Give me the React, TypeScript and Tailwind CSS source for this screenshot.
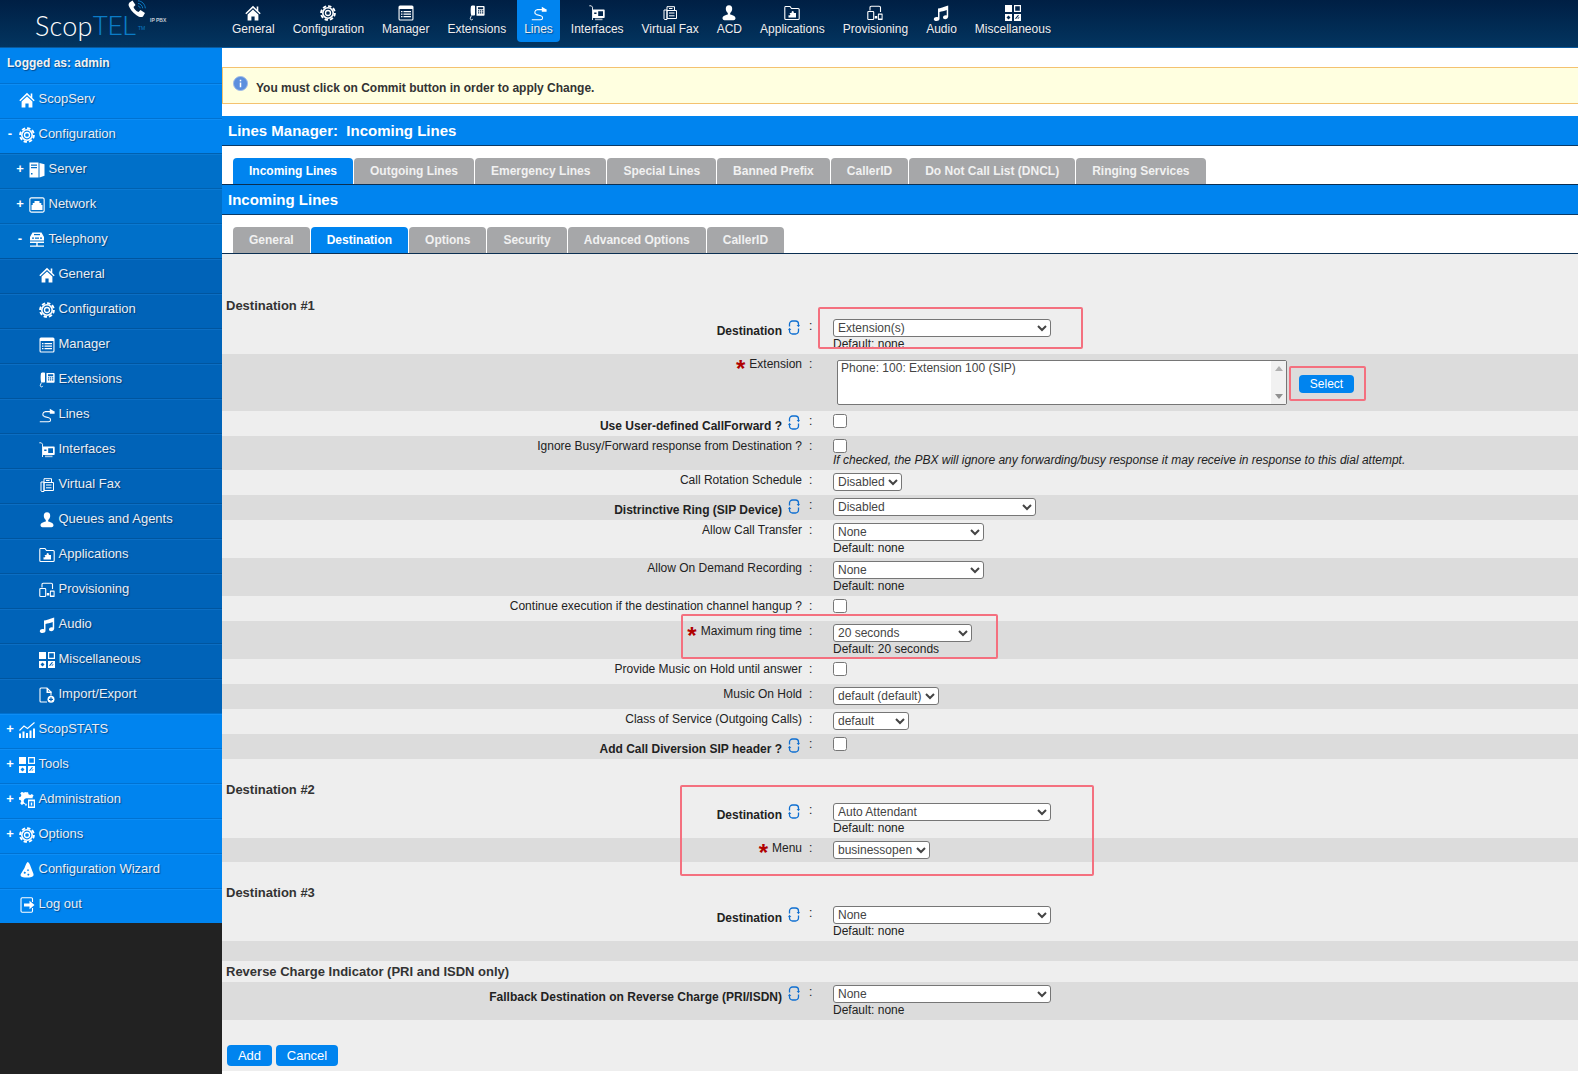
import React from "react";

type IP = { className?: string };
const S = ({ children, className = "" }: { children: React.ReactNode; className?: string }) => (
  <svg viewBox="0 0 16 16" className={"h-4 w-4 shrink-0 text-white " + className} fill="currentColor">{children}</svg>
);
const Home = (p: IP) => (
  <S {...p}><path d="M8 .8 .3 8.2l1 1L8 3l6.700 6.200 1-1-2.400-2.300V1.600h-1.600v2.800z" /><path d="M2.600 9.600 8 4.600l5.400 5v5.800H9.600v-4H6.400v4H2.600z" /></S>
);
const Gear = (p: IP) => (
  <S {...p}><circle cx="8" cy="8" r="6.900" fill="none" stroke="currentColor" strokeWidth="1.900" strokeDasharray="3.400 2" /><circle cx="8" cy="8" r="5.200" fill="none" stroke="currentColor" strokeWidth="1.600" /><circle cx="8" cy="8" r="2.500" fill="none" stroke="currentColor" strokeWidth="1.300" /></S>
);
const Manager = (p: IP) => (
  <S {...p}><path fillRule="evenodd" d="M2 .5h12A1.500 1.500 0 0 1 15.500 2v12a1.500 1.500 0 0 1-1.500 1.500H2A1.500 1.500 0 0 1 .5 14V2A1.500 1.500 0 0 1 2 .5zM1.600 4v10c0 .3.100.4.400.4h12c.3 0 .4-.1.4-.4V4z" /><path d="M3 6h1.500v1.200H3zm2.500 0H13v1.200H5.500zM3 8.500h1.500v1.200H3zm2.500 0H13v1.200H5.500zM3 11h1.500v1.200H3zm2.500 0H13v1.200H5.500z" /></S>
);
const Ext = (p: IP) => (
  <S {...p}><path d="M2 1.200C2.300.5 3 .4 3.500.4h1.700c.5 0 .8.300.8.800v8.600c0 .5-.3.800-.8.800H3.400c-.5 0-1-.2-1.400-.8-.5-2.500-.5-6.500 0-8.600z" /><path d="M2.400 10.500c-.3 1.200-.8 1.700-1.100 2.700-.4 1.700 2 2.400 2.400.7" fill="none" stroke="currentColor" strokeWidth=".9" /><path fillRule="evenodd" d="M7.500.9h7c.7 0 1.100.4 1.100 1.100v7.700c0 .7-.4 1.100-1.100 1.100h-7zM9 2.200v2h5.200v-2zm0 3v1.200h1.300V5.200zm2 0v1.200h1.300V5.200zm2 0v1.200h1.300V5.200zM9 7.300v1.200h1.300V7.300zm2 0v1.200h1.300V7.300zm2 0v1.200h1.300V7.300z" /></S>
);
const Lines = (p: IP) => (
  <S {...p}><path d="M.8 14.800h8.700c2.700 0 2.700-3.400.3-4L5.500 9.600C3 8.800 3.200 5 6.500 4.600h5" fill="none" stroke="currentColor" strokeWidth="1.100" /><path d="M10.800 1.700 15 4.200h.6v2.600h-4.800V6z" /></S>
);
const Iface = (p: IP) => (
  <S {...p}><path d="M.3 .8h2l1.200 1.400V15" fill="none" stroke="currentColor" strokeWidth=".9" /><path fillRule="evenodd" d="M4 4.500h10.700c.6 0 1 .4 1 1v6.500c0 .6-.4 1-1 1H4zm1.200 3v1.600h2.300V7.500zm4-1.300v4.800h4.800V6.200z" /><path d="M6 13.600h7.500v1.600H6z" opacity=".65" /></S>
);
const Fax = (p: IP) => (
  <S {...p}><path fill="none" stroke="currentColor" strokeWidth="1" d="M5 5.500V1.700h7.500v3.800M2 5h3v9.500H2.500l-.5-.5zM5 5.500h9.500v8H5zM7 3.500h3.500M7 8h5.500M7 10.800h5.500" /></S>
);
const Person = (p: IP) => (
  <S {...p}><path d="M8 .3c2.200 0 3.300 1.700 3.200 3.700-.1 1.800-.9 3.200-2 4v1.500c2.500.7 5.300 1.400 5.300 3.800 0 1.200-1 1.900-2 1.900H3.500c-1 0-2-.7-2-1.900 0-2.400 2.800-3.100 5.300-3.800V8c-1.100-.8-1.900-2.200-2-4C4.700 2 5.800.3 8 .3z" /></S>
);
const Apps = (p: IP) => (
  <S {...p}><path fill="none" stroke="currentColor" strokeWidth="1.100" d="M.8 3v10.500c0 .6.400 1 1 1h12.400c.6 0 1-.4 1-1V4.500c0-.6-.4-1-1-1H7.500L6 1.500H1.300C.8 1.500.8 2 .8 3z" /><path d="M6 8h1.700c-.5-1 .2-2 1-2s1.500 1 1 2H12v4.500H4.500v-2.200c1 .4 1.800-.1 1.800-1s-.8-1.400-1.800-1z" /></S>
);
const Prov = (p: IP) => (
  <S {...p}><path fill="none" stroke="currentColor" strokeWidth="1.100" d="M3 5.500V2.500c0-.7.400-1.200 1.200-1.200h8c.8 0 1.300.5 1.300 1.200V7M1.500 6.500h4.500c.4 0 .7.300.7.700v6.600c0 .4-.3.700-.7.700H1.500c-.4 0-.7-.3-.7-.7V7.200c0-.4.300-.7.700-.7z" /><path d="M7.800 11h2.500v2.500H7.800z" /><path fillRule="evenodd" d="M11.500 8.500h3.500c.4 0 .6.200.6.600v5.300c0 .4-.2.600-.6.600h-3.500c-.4 0-.6-.2-.6-.6V9.100c0-.4.200-.6.600-.6zm.4 1.200v3.800h2.700V9.700z" /></S>
);
const Music = (p: IP) => (
  <S {...p}><path d="M5 3.500C7 3 11 2 15.200.4V11.500c0 1.600-1.500 2.700-3 2.700-1.300 0-2.200-.7-2.200-1.700 0-1.300 1.400-2.200 2.700-2.200.4 0 .8.100 1 .2V5C11 6 8.800 6.500 6.500 7v7c0 1.300-1.500 2-3 2C2 16 .8 15.300.8 14.200c0-1.300 1.400-2.200 2.700-2.200.6 0 1 .100 1.500.3z" /></S>
);
const Misc = (p: IP) => (
  <S {...p}><path d="M0 0h7v7H0z" /><path fillRule="evenodd" d="M9 0h7v7H9zm1.200 1.200v4.600h4.600V1.200z" /><path fillRule="evenodd" d="M0 9h7v7H0zM3.500 10.500 1.500 12.500l2 2 2-2z" /><path fillRule="evenodd" d="M9 9h7v7H9zm2 5 3-3.500-1-.5-3 3.500zm2 0 1.500-1.500-.5-.5-1.500 1.500z" /></S>
);
const Server = (p: IP) => (
  <S {...p}><path fillRule="evenodd" d="M.5 .5h9v15h-9zm1.500 2v1.200h6V2.500zm0 2.500v1.200h6V5zM2 11v1.500h1.500V11z" /><path d="M10.500 1l5 1.300v11.500l-5 1.700z" /></S>
);
const Net = (p: IP) => (
  <S {...p}><path fillRule="evenodd" d="M2.500.3h11c1.300 0 2.200.9 2.200 2.200v11c0 1.300-.9 2.200-2.200 2.200h-11c-1.300 0-2.200-.9-2.200-2.200v-11C.3 1.200 1.200.3 2.500.3zm0 1.100c-.7 0-1.100.4-1.100 1.100v11c0 .7.400 1.100 1.100 1.100h11c.7 0 1.100-.4 1.100-1.100v-11c0-.7-.4-1.100-1.100-1.100z" /><path d="M5.500 4h5v2h1.800v2h1.200v5H2.500V8h1.200V6h1.800z" /></S>
);
const Tel = (p: IP) => (
  <S {...p}><path d="M3.500.5h9l2.500 4.500v3.500H1V5z" /><path d="M5 2h6v1.200H5z" fill="#0070c9" /><path d="M3 5.500h2v1.200H3zm3 0h4v1.200H6zm5 0h2v1.200h-2z" fill="#0070c9" /><path d="M1 9.500h14V11H8.700v2.500H15v1.200H1v-1.200h6.300V11H1z" /></S>
);
const FileP = (p: IP) => (
  <S {...p}><path fill="none" stroke="currentColor" strokeWidth="1.100" d="M8 15H2c-.6 0-1-.4-1-1V2c0-.6.400-1 1-1h6l4 4v3.500" /><path d="M7.500 1h1.500v3.500h3.500V6H7.500z" /><circle cx="12" cy="12.300" r="3.500" /><path d="M11.400 10.300h1.200v1.400H14v1.200h-1.400v1.400h-1.200v-1.400H10v-1.200h1.400z" fill="#0063b8" /></S>
);
const Stats = (p: IP) => (
  <S {...p}><path d="M0 11.500h2V16H0zm3.500-2h2V16h-2zm3.500 1.500h2v5H7zM10.500 8.500h2V16h-2zM14 6.500h2V16h-2z" /><path d="M.5 8.500 5 4l3.500 2.500L15.500.5" fill="none" stroke="currentColor" strokeWidth="1.100" /></S>
);
const Admin = (p: IP) => (
  <S {...p}><path d="M6.700.3h2.400l.4 2 1.700.8 1.700-1.200 1.700 1.700-1.100 1.700.4 1H8.200a2.800 2.800 0 1 0-.5 5.500v1.500l-1 .9-.4-1.800-1.700-.7-1.700 1.200L1.200 11.300l1.100-1.700-.7-1.700-1.900-.3V5.200l2-.4.700-1.700-1.200-1.700 1.700-1.700 1.700 1.100 1.700-.7z" /><path fillRule="evenodd" d="M9 7.500h7V16H9zm1.200 1.800v5.300h4.600V9.300zm1.600 1.200h1.400v3h-1.400z" /></S>
);
const Hat = (p: IP) => (
  <S {...p}><path d="M8.500 0c1.500.3 2.600 2.500 3.500 5.500l2.500 6.500c.4 1.500-.5 2.500-2 3-2.500.7-6 .8-8.500.2-2-.5-2.800-1.500-2.300-3L5.500 6C6.500 3.500 7 1.500 8.500 0z" /><path d="M5.500 9.500l1.500 1-1 1.500-1.500-1zM9 7l1 1.200L9 9.300 8 8.200zM9 11.500l1.500.8-.8 1.500-1.500-.8z" fill="#0084ef" /></S>
);
const Logout = (p: IP) => (
  <S {...p}><path fill="none" stroke="currentColor" strokeWidth="1.100" d="M13.500 5V2c0-.7-.4-1.200-1.100-1.200H3.200C2.500.8 2 1.300 2 2v12c0 .7.500 1.200 1.200 1.200h9.200c.7 0 1.100-.5 1.100-1.200v-3" /><path d="M5 6.500h5.500V3.800L15.500 8l-5 4.200V9.500H5z" /></S>
);
const Refresh = () => (
  <svg viewBox="0 0 12 15" className="mt-[4px] ml-[6px] h-[15px] w-[12px] shrink-0 text-[#0f6fd1]" fill="none" stroke="currentColor" strokeWidth="1.300">
    <path d="M1.500 6.500V4a3 3 0 0 1 3-3h3a3 3 0 0 1 3 3v1" />
    <path d="M10.500 8.500V11a3 3 0 0 1-3 3h-3a3 3 0 0 1-3-3v-1" />
    <path d="M8.700 5h3.300L10.500 7.200z" fill="currentColor" stroke="none" />
    <path d="M0 10h3.300L1.500 7.800z" fill="currentColor" stroke="none" />
  </svg>
);

const shadow = "[text-shadow:1px_1px_1px_rgba(0,30,70,0.55)]";

const navItems: [string, React.FC<IP>, boolean?][] = [
  ["General", Home],
  ["Configuration", Gear],
  ["Manager", Manager],
  ["Extensions", Ext],
  ["Lines", Lines, true],
  ["Interfaces", Iface],
  ["Virtual Fax", Fax],
  ["ACD", Person],
  ["Applications", Apps],
  ["Provisioning", Prov],
  ["Audio", Music],
  ["Miscellaneous", Misc],
];

type Side = { t: string; I: React.FC<IP>; l: 0 | 1 | 2; s?: string };
const side: Side[] = [
  { t: "ScopServ", I: Home, l: 0 },
  { t: "Configuration", I: Gear, l: 0, s: "-" },
  { t: "Server", I: Server, l: 1, s: "+" },
  { t: "Network", I: Net, l: 1, s: "+" },
  { t: "Telephony", I: Tel, l: 1, s: "-" },
  { t: "General", I: Home, l: 2 },
  { t: "Configuration", I: Gear, l: 2 },
  { t: "Manager", I: Manager, l: 2 },
  { t: "Extensions", I: Ext, l: 2 },
  { t: "Lines", I: Lines, l: 2 },
  { t: "Interfaces", I: Iface, l: 2 },
  { t: "Virtual Fax", I: Fax, l: 2 },
  { t: "Queues and Agents", I: Person, l: 2 },
  { t: "Applications", I: Apps, l: 2 },
  { t: "Provisioning", I: Prov, l: 2 },
  { t: "Audio", I: Music, l: 2 },
  { t: "Miscellaneous", I: Misc, l: 2 },
  { t: "Import/Export", I: FileP, l: 2 },
  { t: "ScopSTATS", I: Stats, l: 0, s: "+" },
  { t: "Tools", I: Misc, l: 0, s: "+" },
  { t: "Administration", I: Admin, l: 0, s: "+" },
  { t: "Options", I: Gear, l: 0, s: "+" },
  { t: "Configuration Wizard", I: Hat, l: 0 },
  { t: "Log out", I: Logout, l: 0 },
];
const lvlRow = [
  "bg-[#0084ef] border-t-[#0072d2] shadow-[inset_0_1px_0_#0d8df5]",
  "bg-[#0070c9] border-t-[#0061b0] shadow-[inset_0_1px_0_#0a79d2]",
  "bg-[#0063b8] border-t-[#00559f] shadow-[inset_0_1px_0_#0b6ec4]",
];
const lvlPad = ["w-[19px] pl-[6px]", "w-[29px] pl-[16px]", "w-[39px] pl-[16px]"];

const Tabs = ({ items, active }: { items: string[]; active: string }) => (
  <div className="flex h-[39px] items-end gap-[1px] border-b border-b-[#0b2f52] bg-white pl-[11px]">
    {items.map((t) => (
      <div
        key={t}
        className={
          "flex h-[26px] items-center rounded-t-[4px] px-[16px] text-[12px] font-bold " +
          (t === active ? "bg-[#0084ef] text-white" : "bg-[#a6a7a9] text-[#f1f1f1]")
        }
      >
        {t}
      </div>
    ))}
  </div>
);

const Bar = ({ children }: { children: React.ReactNode }) => (
  <div className="h-[30px] border-b border-b-[#0b3a66] bg-[#0084ef] pl-[6px] text-[15px] leading-[30px] font-bold whitespace-pre text-white">
    {children}
  </div>
);

type RowP = {
  label: string;
  bold?: boolean;
  req?: boolean;
  gray?: boolean;
  h: string;
  children?: React.ReactNode;
};
const Row = ({ label, bold, req, gray, h, children }: RowP) => (
  <div className={"flex " + h + " " + (gray ? "bg-[#dcdcdc]" : "bg-[#eeeeee]")}>
    <div className="flex w-[580px] justify-end text-right">
      {req && (
        <span className="mr-[4px] h-[14px] pt-[3px] text-[24px] leading-[24px] font-bold text-[#b00000]">*</span>
      )}
      {bold ? (
        <>
          <span className="pt-[8px] text-[12px] leading-[14px] font-bold text-[#222]">{label}</span>
          <Refresh />
          <span className="w-[2px]" />
        </>
      ) : (
        <span className="pt-[3px] text-[12px] leading-[14px] text-[#222]">{label}</span>
      )}
    </div>
    <div className="w-[31px] pt-[3px] pl-[7px] text-[12px] leading-[14px] text-[#222]">:</div>
    <div className="flex flex-col items-start pt-[3px] text-[12px] leading-[14px] text-[#222]">{children}</div>
  </div>
);

const Sel = ({ w, v }: { w: string; v: string }) => (
  <select
    defaultValue={v}
    className={"h-[18px] shrink-0 rounded-[3px] border border-[#767676] bg-white text-[12px] leading-[14px] text-[#444] " + w}
  >
    <option>{v}</option>
  </select>
);
const Chk = () => <input type="checkbox" className="h-[14px] w-[14px]" />;
const Def = ({ t = "none" }: { t?: string }) => <div>Default: {t}</div>;
const Head = ({ t, cls }: { t: string; cls: string }) => (
  <div className={"bg-[#eeeeee] pl-[4px] text-[13px] leading-[15px] font-bold text-[#333] " + cls}>{t}</div>
);
const Blue = ({ children, cls }: { children: React.ReactNode; cls: string }) => (
  <div className={"flex items-center justify-center rounded-[4px] bg-[#0084ef] text-white " + cls}>{children}</div>
);

export default function App() {
  return (
    <div className="flex min-h-[1074px] flex-col bg-[#222222] font-['Liberation_Sans',Arial,sans-serif]">
      <header className="flex h-[48px] border-b border-b-[#0a5a9e] bg-gradient-to-b from-[#001f44] to-[#033560]">
        <div className="relative flex w-[225px] shrink-0 items-start pt-[8px] pl-[35px]">
          <span className="font-['Lato',sans-serif] text-[27px] leading-[36px] font-light tracking-[0.2px] text-white">Scop</span>
          <span className="font-['Roboto',sans-serif] text-[26px] leading-[36px] font-light tracking-[-0.2px] text-[#0b7cc6]">TEL</span>
          <span className="mt-[17px] ml-[2px] text-[5px] leading-[6px] text-[#0b7cc6]">TM</span>
          <svg viewBox="0 0 22 20" className="absolute top-0 left-[128px] h-[20px] w-[22px]">
            <path d="M1.500 2.500 4.500.5l3 4.500-2 2c1 2.500 2.500 4 5 5l2-2 4.500 3-2 3.500c-1.500 1.200-4 .5-6.500-1.300C4.500 12.500 2 9 .8 6c-.5-1.500 0-2.700.7-3.500z" fill="#fff" />
            <path d="M10 .8c4 .3 7 3.300 7.300 7.500M10 3.400c2.500.2 4.500 2.300 4.700 4.900M10 6c1.200.1 2.100 1.100 2.200 2.300" fill="none" stroke="#0b7cc6" strokeWidth="1" />
          </svg>
          <span className="absolute top-[17px] left-[150px] text-[5px] leading-[6px] font-bold whitespace-nowrap text-[#c3ccd6]">IP PBX</span>
        </div>
        <nav className="flex gap-[4px]">
          {navItems.map(([t, I, on]) => (
            <div
              key={t}
              className={"flex h-[42px] flex-col items-center rounded-b-[4px] px-[7px] pt-[5px] " + (on ? "bg-[#0084ef]" : "")}
            >
              <I />
              <span className={"mt-[0.5px] text-[12px] leading-[14px] whitespace-nowrap text-[#eeeeee] " + shadow}>{t}</span>
            </div>
          ))}
        </nav>
      </header>

      <div className="flex flex-1">
        <aside className="w-[222px] shrink-0">
          <div className={"h-[35px] bg-[#0084ef] pt-[8px] pl-[7px] text-[12px] leading-[15px] font-bold text-[#f2f2f2] " + shadow}>
            Logged as: admin
          </div>
          {side.map((r, i) => (
            <div key={i} className={"flex h-[35px] border-t pt-[7px] " + lvlRow[r.l]}>
              <span className={"shrink-0 text-[13px] leading-[15px] font-bold text-white " + lvlPad[r.l]}>
                <span className="block w-[8px] text-center">{r.s}</span>
              </span>
              <r.I className="mt-[1px]" />
              <span className={"ml-[3.5px] text-[13px] leading-[15px] text-[#e9eef5] " + shadow}>{r.t}</span>
            </div>
          ))}
        </aside>

        <main className="relative flex-1 bg-white">
          <div className="mt-[19px] flex h-[37px] border-y border-l border-[#f4c26f] bg-[#ffffe0] pl-[10px]">
            <svg viewBox="0 0 16 16" className="mt-[8px] h-[15px] w-[15px]">
              <circle cx="8" cy="8" r="7.500" fill="#5c8fde" stroke="#9db9e8" />
              <rect x="7.200" y="7" width="1.600" height="5" fill="#fff" />
              <rect x="7.200" y="4" width="1.600" height="1.700" fill="#fff" />
            </svg>
            <span className="ml-[8px] pt-[12px] text-[12px] leading-[16px] font-bold text-[#333]">
              You must click on Commit button in order to apply Change.
            </span>
          </div>
          <div className="mt-[12px]">
            <Bar>Lines Manager:  Incoming Lines</Bar>
          </div>
          <Tabs
            items={["Incoming Lines", "Outgoing Lines", "Emergency Lines", "Special Lines", "Banned Prefix", "CallerID", "Do Not Call List (DNCL)", "Ringing Services"]}
            active="Incoming Lines"
          />
          <Bar>Incoming Lines</Bar>
          <Tabs items={["General", "Destination", "Options", "Security", "Advanced Options", "CallerID"]} active="Destination" />

          <Head t="Destination #1" cls="h-[62px] pt-[44px]" />
          <Row label="Destination" bold h="h-[38px]">
            <Sel w="w-[218px]" v="Extension(s)" />
            <Def />
          </Row>
          <Row label="Extension" req gray h="h-[57px]">
            <div className="flex items-start pt-[3px] pl-[4px]">
              <div className="flex h-[45px] w-[450px] rounded-[2px] border border-[#767676] bg-white">
                <div className="flex-1 pl-[3px] text-[12px] text-[#444]">Phone: 100: Extension 100 (SIP)</div>
                <div className="flex w-[15px] flex-col items-center justify-between bg-[#f1f1f1] py-[5px]">
                  <svg viewBox="0 0 8 5" className="h-[5px] w-[8px]"><path d="M4 0 8 5H0z" fill="#b0b0b0" /></svg>
                  <svg viewBox="0 0 8 5" className="h-[5px] w-[8px]"><path d="M0 0h8L4 5z" fill="#909090" /></svg>
                </div>
              </div>
              <Blue cls="mt-[15px] ml-[12px] h-[18px] w-[55px] text-[12px]">Select</Blue>
            </div>
          </Row>
          <Row label="Use User-defined CallForward ?" bold h="h-[25px]"><Chk /></Row>
          <Row label="Ignore Busy/Forward response from Destination ?" gray h="h-[34px]">
            <Chk />
            <i className="whitespace-nowrap">If checked, the PBX will ignore any forwarding/busy response it may receive in response to this dial attempt.</i>
          </Row>
          <Row label="Call Rotation Schedule" h="h-[25px]"><Sel w="w-[69px]" v="Disabled" /></Row>
          <Row label="Distrinctive Ring (SIP Device)" bold gray h="h-[25px]"><Sel w="w-[203px]" v="Disabled" /></Row>
          <Row label="Allow Call Transfer" h="h-[38px]"><Sel w="w-[151px]" v="None" /><Def /></Row>
          <Row label="Allow On Demand Recording" gray h="h-[38px]"><Sel w="w-[151px]" v="None" /><Def /></Row>
          <Row label="Continue execution if the destination channel hangup ?" h="h-[25px]"><Chk /></Row>
          <Row label="Maximum ring time" req gray h="h-[38px]"><Sel w="w-[139px]" v="20 seconds" /><Def t="20 seconds" /></Row>
          <Row label="Provide Music on Hold until answer" h="h-[25px]"><Chk /></Row>
          <Row label="Music On Hold" gray h="h-[25px]"><Sel w="w-[106px]" v="default (default)" /></Row>
          <Row label="Class of Service (Outgoing Calls)" h="h-[25px]"><Sel w="w-[76px]" v="default" /></Row>
          <Row label="Add Call Diversion SIP header ?" bold gray h="h-[25px]"><Chk /></Row>

          <Head t="Destination #2" cls="h-[41px] pt-[23px]" />
          <Row label="Destination" bold h="h-[38px]"><Sel w="w-[218px]" v="Auto Attendant" /><Def /></Row>
          <Row label="Menu" req gray h="h-[24px]"><Sel w="w-[97px]" v="businessopen" /></Row>

          <Head t="Destination #3" cls="h-[41px] pt-[23px]" />
          <Row label="Destination" bold h="h-[38px]"><Sel w="w-[218px]" v="None" /><Def /></Row>
          <div className="h-[20px] bg-[#dcdcdc]" />
          <Head t="Reverse Charge Indicator (PRI and ISDN only)" cls="h-[21px] pt-[3px]" />
          <Row label="Fallback Destination on Reverse Charge (PRI/ISDN)" bold gray h="h-[38px]"><Sel w="w-[218px]" v="None" /><Def /></Row>

          <div className="flex h-[51px] gap-[4px] bg-[#eeeeee] pt-[25px] pl-[5px]">
            <Blue cls="h-[21px] w-[45px] text-[13px]">Add</Blue>
            <Blue cls="h-[21px] w-[62px] text-[13px]">Cancel</Blue>
          </div>

          <div className="pointer-events-none absolute top-[259px] left-[596px] h-[42px] w-[265px] rounded-[2px] border-2 border-[#f4707f]" />
          <div className="pointer-events-none absolute top-[318px] left-[1067px] h-[35px] w-[77px] rounded-[2px] border-2 border-[#f4707f]" />
          <div className="pointer-events-none absolute top-[566px] left-[459px] h-[45px] w-[317px] rounded-[2px] border-2 border-[#f4707f]" />
          <div className="pointer-events-none absolute top-[737px] left-[458px] h-[91px] w-[414px] rounded-[2px] border-2 border-[#f4707f]" />
        </main>
      </div>
    </div>
  );
}
